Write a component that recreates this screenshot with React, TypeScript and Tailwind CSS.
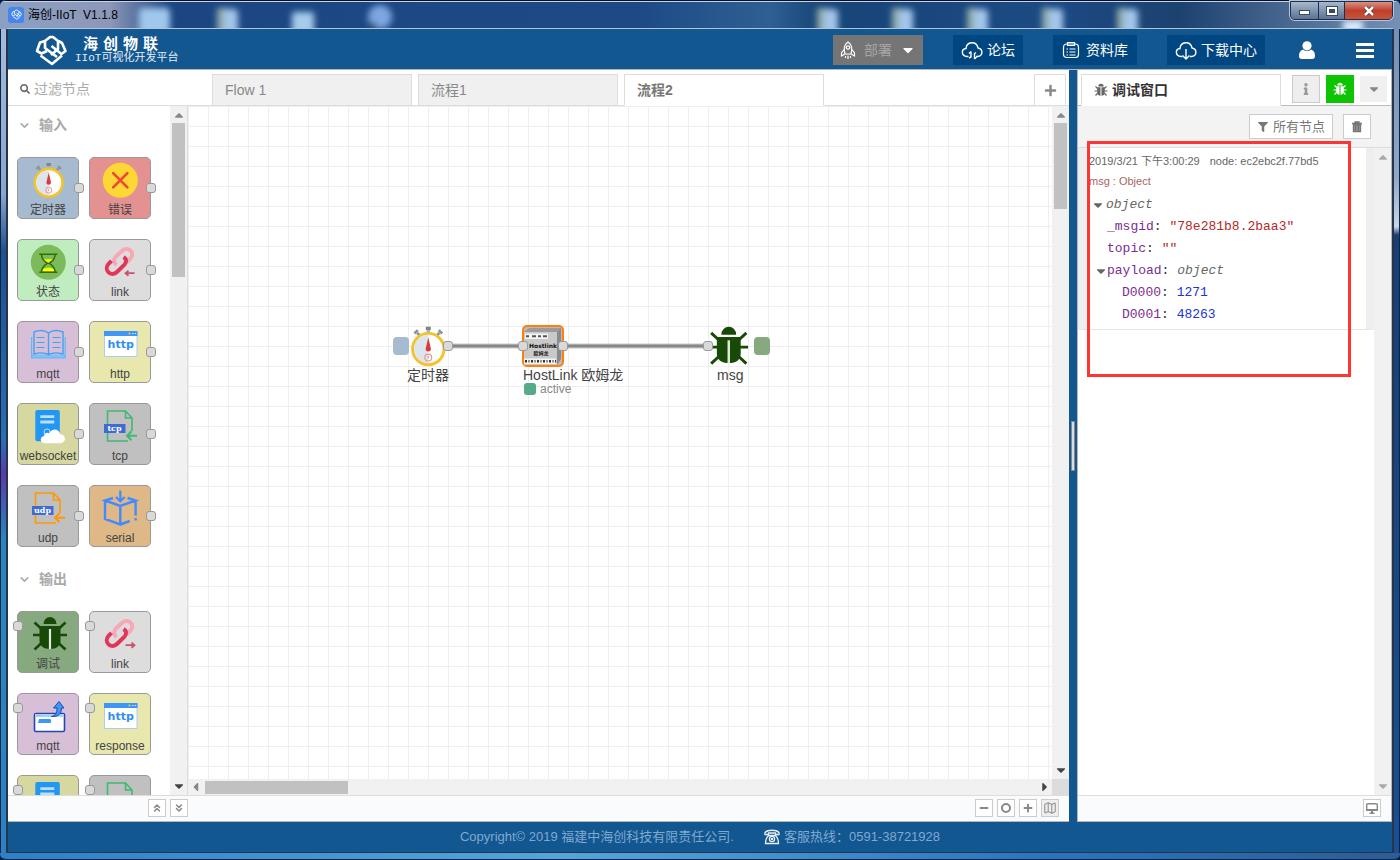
import React from 'react';
import { ChevronDown, ChevronsDown, ChevronsUp, Map as MapIcon } from 'lucide-react';
import { FaCaretDown, FaCaretUp, FaFilter, FaInfo, FaMinus, FaPlus, FaSearch } from 'react-icons/fa';

type IconProps = { className?: string };

/* ---------- node icons, all drawn on the 62x44 top part of a node ---------- */

function NodeIcon({ className = 'w-full h-[44px]', children }: IconProps & { children: React.ReactNode }) {
  return (
    <svg viewBox="0 0 62 44" fill="none" className={className} aria-hidden="true">
      {children}
    </svg>
  );
}

function TimerIcon({ className }: IconProps) {
  return (
    <NodeIcon className={className}>
      <path d="M29.5 5h4.4v3h-4.4z" fill="#7d868c" />
      <path d="M31.7 8v3" stroke="#a9b0b4" strokeWidth="3" />
      <path d="M19.5 11l3-3M22 10.5l2 2M43.9 11l-3-3M41.4 10.5l-2 2" stroke="#8b9499" strokeWidth="2.4" />
      <circle cx="31.7" cy="24.7" r="13.8" fill="#fff" stroke="#f4c22b" strokeWidth="2.6" />
      <path d="M31.7 12.2a12.5 12.5 0 0 0 0 25z" fill="#dde5ec" />
      <path d="M31.7 14.5l2.3 10a2.3 2.3 0 1 1-4.6 0z" fill="#d93a3a" />
      <circle cx="31.7" cy="32.2" r="3" stroke="#f0928e" />
      <path d="M31.7 30.8v2.2" stroke="#f0928e" />
    </NodeIcon>
  );
}

function ErrorIcon() {
  return (
    <NodeIcon>
      <circle cx="31.3" cy="22.3" r="17.5" fill="#fdd835" />
      <path d="M24.2 15.2l14.2 14.2M38.4 15.2L24.2 29.4" stroke="#f44336" strokeWidth="2.6" strokeLinecap="round" />
    </NodeIcon>
  );
}

function StatusIcon() {
  return (
    <NodeIcon>
      <circle cx="31.3" cy="22.3" r="17.5" fill="#7dba5a" />
      <path d="M25.5 20.5l1.5-1.2h8l1.8 0-5.5 3.2zM24.5 31.5c1-5 13-5 14 0z" fill="#ffff00" />
      <path
        d="M22.3 14.3h18M22.3 32.3h18M24.5 14.5c0 5 3 7 5.8 8.8-2.8 1.8-5.8 4-5.8 8.8M38.1 14.5c0 5-3 7-5.8 8.8 2.8 1.8 5.8 4 5.8 8.8"
        stroke="#2d7008"
        strokeWidth="1.5"
      />
    </NodeIcon>
  );
}

function LinkIcon({ out = false }: { out?: boolean }) {
  return (
    <NodeIcon>
      <path
        d="M27.5 25c-2.8-2.2-3.2-5.8-.8-8.2l6.5-6c2.6-2.4 6.2-2.2 8.4-.1s2.2 5.400-.2 7.800l-3.400 3.500"
        stroke="#f6a8b6"
        strokeWidth="4"
      />
      <path
        d="M22.500 20.800l-3 3c-2.400 2.600-2.200 6.400 0 8.600s6 2 8.400-.4l7.600-7.400c2.400-2.600 2-5.600-.9-7.600"
        stroke="#e3355a"
        strokeWidth="4"
      />
      {out ? (
        <path d="M36.500 33.200h8M42.500 30.600l3 2.600-3 2.600" stroke="#cc5069" strokeWidth="1.8" />
      ) : (
        <path d="M45.500 33.200h-8M39.500 30.600l-3 2.600 3 2.600" stroke="#cc5069" strokeWidth="1.8" />
      )}
    </NodeIcon>
  );
}

function BookIcon() {
  return (
    <NodeIcon>
      <path d="M15 32.500h33V36H15z" fill="#7fc0f8" />
      <path
        d="M17 10c5-2 10.500-2 14.500 1v21.500c-4-2-9.500-2-14.500-.5zM46 10c-5-2-10.500-2-14.500 1v21.500c4-2 9.500-2 14.500-.5z"
        stroke="#42a0f5"
        strokeWidth="1.4"
      />
      <path d="M14.600 15v21h33.600V15" stroke="#64b5f6" strokeWidth="1.2" />
      <path d="M19.500 15.500h8M19.500 20.500h8M19.500 25.500h8M35.500 15.500h8M35.500 20.500h8M35.500 25.500h8" stroke="#42a0f5" strokeWidth="1.2" />
    </NodeIcon>
  );
}

function HttpIcon() {
  return (
    <NodeIcon>
      <path d="M15.500 9.500h32.500v25H15.500z" fill="#fff" stroke="#a9cdf0" />
      <path d="M15 9h33.500v5H15z" fill="#3c97f6" />
      <circle cx="40.5" cy="11.5" r="1" fill="#fdd835" />
      <path d="M43 11.500h4" stroke="#c9e0fa" strokeDasharray="1.5 1" />
      <text x="31.7" y="26" textAnchor="middle" fill="#2f8ff5" fontSize="11" fontWeight="700" fontFamily="DejaVu Sans, sans-serif">
        http
      </text>
    </NodeIcon>
  );
}

function WebsocketIcon() {
  return (
    <NodeIcon>
      <rect x="18.3" y="6" width="24.5" height="31.3" rx="2" fill="#2196f3" />
      <path d="M23.300 12.700h14M23.300 18h14" stroke="#bbdefb" strokeWidth="2.8" />
      <circle cx="30" cy="28" r="3" stroke="#bbdefb" />
      <path d="M28 39.300c-5.500 0-5.500-7-.8-7.300 0-3 3.300-4 5-2.500 2-5.500 10-5.300 11 .8 6.500.2 6 9 .3 9z" fill="#fff" />
    </NodeIcon>
  );
}

function ProtocolIcon({ name, doc }: { name?: string; doc: string }) {
  return (
    <NodeIcon>
      <path d="M39 37H18.500V7h18l6.500 7v13M36.500 7v7H43" stroke={doc} strokeWidth="1.6" />
      <path d="M15 20h21.500v9H15z" fill="#3f6bd6" />
      {name && (
        <text x="25.5" y="27" textAnchor="middle" fill="#fff" fontSize="8" fontWeight="700" fontFamily="DejaVu Serif, serif">
          {name}
        </text>
      )}
      <path d="M48 31.700H38M42.500 27.200L38 31.700l4.500 4.500" stroke={doc} strokeWidth="2" />
    </NodeIcon>
  );
}

function SerialIcon() {
  return (
    <NodeIcon>
      <path d="M31.300 4.500V15M27 11l4.300 4.300L35.600 11" stroke="#448aff" strokeWidth="2.2" />
      <path
        d="M24 12L16 14.500l15.300 5.500L46.600 14.500l-8-2.500M16 14.500V33l15.300 5.500V20M31.300 38.500l9.500-3.500M46.600 14.500v15M46.600 32v2.500"
        stroke="#448aff"
        strokeWidth="2.4"
      />
    </NodeIcon>
  );
}

function BeetleIcon({ className }: IconProps) {
  return (
    <NodeIcon className={className}>
      <path d="M26.500 12a6.500 7 0 0 1 13 0z" fill="#174a06" />
      <path d="M22.500 14h21v14.500c0 5.500-4 8.500-10.500 8.500s-10.500-3-10.500-8.500z" fill="#174a06" />
      <path d="M33 17v20" stroke="#dfe8da" strokeWidth="2.2" />
      <path
        d="M24 16.500l-6.500-6M42 16.500l6.500-6M23 23h-7M43 23h7M24.500 31l-7 6.500M41.500 31l7 6.500"
        stroke="#174a06"
        strokeWidth="2.6"
      />
    </NodeIcon>
  );
}

function PublishIcon() {
  return (
    <NodeIcon>
      <rect x="17.5" y="19.5" width="30" height="18" rx="1.5" fill="#fff" stroke="#2346b0" strokeWidth="1.6" />
      <path d="M18 20h29v3H18z" fill="#a8d0ff" />
      <path d="M19.500 21.500h5" stroke="#f0a050" strokeDasharray="1 1" />
      <path d="M22 25h11c1.500 0 1.500 4 0 4H21z" fill="#3f96fa" />
      <path d="M34.500 22.500c4-1 5.500-3 5.500-8.500h-3.500L42 7.500l5 6.500h-2.500c0 6.500-4 9-10 8.500z" fill="#3f96fa" stroke="#2346b0" />
    </NodeIcon>
  );
}

function DeviceIcon() {
  return (
    <svg viewBox="0 0 38 38" className="h-[38px] w-[38px]" aria-hidden="true">
      <path d="M0 5l5-4h32l-4 4z" fill="#9b9b9b" />
      <path d="M33 5l4-4v31l-4 6z" fill="#8a8a8a" />
      <path d="M0 5h33v33H0z" fill="#c9c9c9" />
      <path d="M1 6.500h23V12H1zM0 31.500h32V37H0z" fill="#f4f4f4" />
      <path d="M2 9.300h3M8 9.300h4M14 9.300h3M19 9.300h4" stroke="#555" strokeWidth="2" />
      <path d="M1 34.300h31" stroke="#333" strokeWidth="2.4" strokeDasharray="2 1.5 1 1.5" />
      <text x="19" y="20.5" textAnchor="middle" fontSize="6" fontWeight="700" fontFamily="DejaVu Sans, sans-serif" fill="#111">
        Hostlink
      </text>
      <text x="17" y="28" textAnchor="middle" fontSize="5" fontWeight="700" fontFamily="Noto Sans CJK SC, sans-serif" fill="#222">
        欧姆龙
      </text>
    </svg>
  );
}

/* ---------- small interface icons ---------- */

function BugIcon({ className }: IconProps) {
  return (
    <svg viewBox="0 0 14 14" className={className} aria-hidden="true">
      <path d="M4.300 3.500a2.700 2.700 0 0 1 5.400 0z" fill="currentColor" />
      <path d="M3.200 4.200h3.300v8.600C4.300 12.800 3.200 11 3.200 9zM7.500 4.200h3.300V9c0 2-1.100 3.800-3.300 3.800z" fill="currentColor" />
      <path d="M3.500 5.500L1.500 3.300M10.500 5.500l2-2.200M3.500 8H.5M10.500 8h3M3.800 10l-2.300 2.500M10.200 10l2.300 2.500" stroke="currentColor" strokeWidth="1.2" />
    </svg>
  );
}

function Logo({ className }: IconProps) {
  return (
    <svg viewBox="0 0 32 32" fill="none" stroke="currentColor" strokeWidth="2.6" strokeLinejoin="round" className={className} aria-hidden="true">
      <path d="M16 21l7-6V7l-5-4h-3l-5 4v7l12 9" />
      <path d="M10 7L5 8.500 2 17l4.500 2.500L12 17" />
      <path d="M23.500 7l3.500 2 3.500 8-4 3-10-8" />
      <path d="M5.500 21.500L17 30l10-8.500" />
    </svg>
  );
}

function RocketIcon() {
  return (
    <svg viewBox="0 0 16 18" fill="none" stroke="#fff" strokeWidth="1.2" className="h-[18px] w-[16px]" aria-hidden="true">
      <path d="M5 13c-1.500-5-.5-9.500 3-12 3.500 2.500 4.500 7 3 12zM4.500 8l-3 4v3L5 13M11.500 8l3 4v3L11 13M5.500 15v2M8 14.500V18M10.500 15v2" />
      <circle cx="8" cy="6.5" r="1.7" />
    </svg>
  );
}

function CloudIcon({ children }: { children: React.ReactNode }) {
  return (
    <svg viewBox="0 0 22 20" fill="none" stroke="#fff" strokeWidth="1.4" className="h-[20px] w-[22px]" aria-hidden="true">
      <path d="M7.500 16.500H6c-6-.5-6-7.500-1-8 .5-7 10.500-8 12-.5 5.500 1 5 8-.5 8.500H15" />
      {children}
    </svg>
  );
}

function ClipboardIcon() {
  return (
    <svg viewBox="0 0 18 18" fill="none" stroke="#fff" strokeWidth="1.2" className="h-[18px] w-[18px]" aria-hidden="true">
      <rect x="1.5" y="3" width="15" height="13.5" rx="3" />
      <path d="M5.500 4.500v-3h7v3zM7.500 8h6M7.500 11h6M7.500 14h6M4.500 8H6M4.500 11H6M4.500 14H6" />
    </svg>
  );
}

function PhoneIcon() {
  return (
    <svg viewBox="0 0 16 16" fill="none" stroke="#e6eef6" strokeWidth="1.3" className="h-[16px] w-[16px]" aria-hidden="true">
      <path d="M1 5.500V3.500c3-3 11-3 14 0v2h-3.500V4h-7v1.500zM4.500 6.500C2 9 1.500 11 1.500 14.500h13c0-3.500-.5-5.500-3-8z" />
      <circle cx="8" cy="10" r="2.6" />
      <circle cx="8" cy="10" r=".6" />
    </svg>
  );
}

/* ---------- window frame ---------- */

function TitleBar() {
  return (
    <div className="relative flex h-[29px] shrink-0 items-start justify-between overflow-hidden rounded-t-[6px] bg-[linear-gradient(90deg,#8ba0c4_0px,#8d97b8_110px,#1b4682_170px,#1d4a85_640px,#2e6093_770px,#174577_820px,#1c4a84_1050px,#1c4270_1180px,#4a6890_1290px,#7590b4_100%)]">
      <svg className="absolute inset-0 h-full w-full" aria-hidden="true">
        <defs>
          <filter id="soft" x="-50%" y="-50%" width="200%" height="200%">
            <feGaussianBlur stdDeviation="3" />
          </filter>
        </defs>
        <g filter="url(#soft)">
          <rect x="139" y="8" width="31" height="26" rx="4" fill="#9fc8ec" />
          <rect x="292" y="12" width="22" height="24" rx="3" fill="#a7cbec" />
          <circle cx="380" cy="17" r="12" fill="#7ea6e0" />
          <circle cx="372" cy="27" r="5" fill="#33507c" />
          <rect x="1343" y="20" width="20" height="16" fill="#d8e8fa" />
          {[217, 817, 892, 967, 1042, 1117].map((x) => (
            <g key={x}>
              <rect x={x} y="8" width="10" height="28" fill="#90aaa8" />
              <rect x={x + 7} y="9" width="14" height="28" rx="4" fill="#a3c6ea" />
            </g>
          ))}
        </g>
        <path d="M0 .5h1400" stroke="#04102a" />
        <path d="M4 1.500h1392" stroke="#c5d3e6" />
        <path d="M7 28.500h1386" stroke="#b3c3d8" />
      </svg>
      <div className="relative flex h-full items-center gap-1 pl-2">
        <span className="flex h-[16px] w-[16px] items-center justify-center rounded-[3px] bg-[#4585ee] text-white">
          <Logo className="h-[11px] w-[11px]" />
        </span>
        <span className="whitespace-pre text-[12px] text-black">海创-IIoT  V1.1.8</span>
      </div>
      <div className="relative mr-[7px] mt-[1px] flex h-[19px] overflow-hidden rounded-b-[5px] border border-[#1c2f4c] shadow-[0_0_0_1px_#b8c6da]">
        <button aria-label="最小化" className="flex w-[28px] items-center justify-center border-r border-[#1c2f4c] bg-linear-to-b from-[#a9b7cb] to-[#5b7396]">
          <span className="mt-1 h-[5px] w-[11px] border border-[#3b4a63] bg-white" />
        </button>
        <button aria-label="最大化" className="flex w-[26px] items-center justify-center border-r border-[#1c2f4c] bg-linear-to-b from-[#a9b7cb] to-[#5b7396]">
          <span className="h-[8px] w-[10px] border-2 border-white bg-[#3b4a63] outline outline-[#3b4a63]" />
        </button>
        <button aria-label="关闭" className="flex w-[47px] items-center justify-center bg-linear-to-b from-[#d99083] via-[#c0402a] to-[#c9533a]">
          <svg viewBox="0 0 12 10" className="h-[10px] w-[12px]" aria-hidden="true">
            <path d="M2 1l8 8M10 1L2 9" stroke="#5a2a2a" strokeWidth="4" />
            <path d="M2 1l8 8M10 1L2 9" stroke="#fff" strokeWidth="2.5" />
          </svg>
        </button>
      </div>
    </div>
  );
}

function Header() {
  const link = 'flex h-[30px] items-center gap-1 bg-[#004681] px-2 text-[14px] text-white';
  return (
    <header className="flex h-[41px] shrink-0 items-center justify-between border-b border-[#b4b7bb] bg-[#135791] pt-[2px] pl-[27px] pr-[18px] text-white">
      <div className="flex items-center gap-2">
        <Logo className="h-[32px] w-[32px]" />
        <div className="flex flex-col">
          <span className="flex gap-[5px] pl-2 text-[15px] font-bold leading-[17px]">
            {['海', '创', '物', '联'].map((c) => (
              <span key={c}>{c}</span>
            ))}
          </span>
          <span className="font-['Liberation_Mono','Noto_Sans_CJK_SC',monospace] text-[11px] leading-[13px] text-[#e3edf6]">IIoT可视化开发平台</span>
        </div>
      </div>
      <nav className="flex items-center gap-[30px]">
        <button className="flex h-[30px] w-[90px] items-center justify-between bg-[#757575] px-[7px] text-[14px] text-[#a6a6a6]">
          <RocketIcon />
          <span>部署</span>
          <FaCaretDown className="text-[16px] text-white" />
        </button>
        <a href="#forum" className={link}>
          <CloudIcon>
            <path d="M10 11.500v5.500l-2 1M13.500 19v-5.500l1.500-1M10 11.500L8 13.500M13.500 19l2-2" />
          </CloudIcon>
          论坛
        </a>
        <a href="#docs" className="flex h-[30px] items-center gap-[6px] bg-[#004681] px-[9px] text-[14px] text-white">
          <ClipboardIcon />
          资料库
        </a>
        <a href="#download" className={link}>
          <CloudIcon>
            <path d="M11 9v10M7.500 15.500L11 19l3.500-3.500" />
          </CloudIcon>
          下载中心
        </a>
        <div className="flex items-center gap-[41px] pl-1">
          <button aria-label="用户">
            <svg viewBox="0 0 16 18" fill="#fff" className="h-[18px] w-[16px]" aria-hidden="true">
              <circle cx="8" cy="4.8" r="4.6" />
              <path d="M4 8.500c2.500 2 5.500 2 8 0 3 1 4 3.500 4 6.500 0 2-1.200 3-2.700 3H2.700C1.200 18 0 17 0 15c0-3 1-5.500 4-6.500z" />
            </svg>
          </button>
          <button aria-label="菜单" className="flex w-[18px] flex-col gap-[3px]">
            <span className="h-[3px] bg-white" />
            <span className="h-[3px] bg-white" />
            <span className="h-[3px] bg-white" />
          </button>
        </div>
      </nav>
    </header>
  );
}

/* ---------- palette ---------- */

type PaletteNode = { label?: string; color: string; icon: React.ReactNode };

const inputs: PaletteNode[] = [
  { label: '定时器', color: 'bg-[#a6bbcf]', icon: <TimerIcon /> },
  { label: '错误', color: 'bg-[#e49191]', icon: <ErrorIcon /> },
  { label: '状态', color: 'bg-[#c0edc0]', icon: <StatusIcon /> },
  { label: 'link', color: 'bg-[#dddddd]', icon: <LinkIcon /> },
  { label: 'mqtt', color: 'bg-[#d8bfd8]', icon: <BookIcon /> },
  { label: 'http', color: 'bg-[#e7e7ae]', icon: <HttpIcon /> },
  { label: 'websocket', color: 'bg-[#d7d7a0]', icon: <WebsocketIcon /> },
  { label: 'tcp', color: 'bg-[#c0c0c0]', icon: <ProtocolIcon name="tcp" doc="#3fb873" /> },
  { label: 'udp', color: 'bg-[#c0c0c0]', icon: <ProtocolIcon name="udp" doc="#ff9800" /> },
  { label: 'serial', color: 'bg-[#deb887]', icon: <SerialIcon /> },
];

const outputs: PaletteNode[] = [
  { label: '调试', color: 'bg-[#87a980]', icon: <BeetleIcon /> },
  { label: 'link', color: 'bg-[#dddddd]', icon: <LinkIcon out /> },
  { label: 'mqtt', color: 'bg-[#d8bfd8]', icon: <PublishIcon /> },
  { label: 'response', color: 'bg-[#e7e7ae]', icon: <HttpIcon /> },
  { color: 'bg-[#d7d7a0]', icon: <WebsocketIcon /> },
  { color: 'bg-[#c0c0c0]', icon: <ProtocolIcon doc="#3fb873" /> },
];

const port = 'absolute h-[10px] w-[10px] rounded-[3px] border border-[#999] bg-[#d9d9d9]';

function Category({ title, nodes, side }: { title: string; nodes: PaletteNode[]; side: 'left' | 'right' }) {
  return (
    <section>
      <h2 className="h-[38px] text-[14px] font-bold text-[#aaa]">
        <button className="flex h-full items-center gap-2 pl-[10px]">
          <ChevronDown className="h-[13px] w-[13px]" strokeWidth={3} />
          {title}
        </button>
      </h2>
      <div className="grid grid-cols-[62px_62px] gap-x-[10px] gap-y-[20px] px-[9px] py-[13px]">
        {nodes.map((node, i) => (
          <div
            key={i}
            className={`relative flex h-[62px] flex-col items-center rounded-[5px] border border-[#999] ${node.color}`}
          >
            <div className="h-[44px] w-[62px]">{node.icon}</div>
            <span className="text-[12px] leading-[16px] text-[#444]">{node.label}</span>
            <span className={side === 'right' ? `${port} -right-[6px] top-[25px]` : `${port} -left-[5px] top-[9px]`} />
          </div>
        ))}
      </div>
    </section>
  );
}

function VScroll({ thumb, up = 'text-[#888]', down = 'text-[#444]' }: { thumb: string; up?: string; down?: string }) {
  return (
    <div className="flex w-[17px] shrink-0 flex-col items-center bg-[#f1f1f1]">
      <FaCaretUp className={`mt-[2px] mb-px h-[14px] w-[12px] shrink-0 ${up}`} />
      <div className={`w-[13px] bg-[#c1c1c1] ${thumb}`} />
      <FaCaretDown className={`mt-auto mb-[2px] h-[14px] w-[12px] shrink-0 ${down}`} />
    </div>
  );
}

function Palette() {
  return (
    <aside className="flex w-[180px] shrink-0 border-r border-[#ddd]">
      <div className="min-w-0 flex-1 overflow-hidden">
        <Category title="输入" nodes={inputs} side="right" />
        <Category title="输出" nodes={outputs} side="left" />
      </div>
      <VScroll thumb="h-[154px]" />
    </aside>
  );
}

/* ---------- flow canvas ---------- */

function Canvas() {
  return (
    <div className="relative min-h-0 min-w-0 flex-1 overflow-hidden bg-white bg-[linear-gradient(#eee_1px,transparent_1px),linear-gradient(90deg,#eee_1px,transparent_1px)] bg-[size:20px_20px] text-[14px] text-[#444]">
      <svg className="absolute inset-0 h-full w-full" aria-hidden="true">
        <path d="M260 240h75M375 240h145" stroke="#ccc" strokeWidth="5" />
        <path d="M260 240h75M375 240h145" stroke="#888" strokeWidth="3" />
      </svg>

      <span className="absolute left-[205px] top-[231px] h-[18px] w-[16px] rounded-[4px] bg-[#a6bbcf]" />
      <div className="absolute left-[204px] top-[215px]">
        <TimerIcon className="h-[50px] w-[71px]" />
      </div>
      <span className={`${port} left-[255px] top-[235px]`} />
      <span className="absolute left-[219px] top-[259px] leading-[20px]">定时器</span>

      <div className="absolute left-[334px] top-[219px] rounded-[5px] border-2 border-[#ff7f0e] bg-[#bbb]">
        <DeviceIcon />
      </div>
      <span className={`${port} left-[330px] top-[235px]`} />
      <span className={`${port} left-[370px] top-[235px]`} />
      <span className="absolute left-[335px] top-[259px] whitespace-nowrap leading-[20px]">HostLink 欧姆龙</span>
      <span className="absolute left-[336px] top-[276px] flex items-center gap-[4px] text-[12px] leading-[14px] text-[#888]">
        <span className="h-[12px] w-[12px] rounded-[3px] bg-[#5a8]" />
        active
      </span>

      <div className="absolute left-[503px] top-[215px]">
        <BeetleIcon className="h-[50px] w-[71px]" />
      </div>
      <span className={`${port} left-[515px] top-[235px]`} />
      <span className="absolute left-[566px] top-[231px] h-[18px] w-[16px] rounded-[4px] bg-[#87a980]" />
      <span className="absolute left-[529px] top-[259px] leading-[20px]">msg</span>
    </div>
  );
}

function Editor() {
  const tab = 'h-[32px] w-[200px] border px-3 text-left text-[14px]';
  const tool = 'flex h-[18px] w-[18px] items-center justify-center border border-[#ccc] bg-white text-[#888]';
  return (
    <main className="flex min-w-0 flex-1 flex-col bg-white">
      <div className="flex h-[36px] shrink-0 items-end border-b border-[#ddd]">
        <label className="flex h-full w-[204px] shrink-0 items-center gap-1 pl-[12px] pt-[3px]">
          <FaSearch className="h-[10px] w-[10px] shrink-0 text-[#666]" />
          <input type="text" placeholder="过滤节点" aria-label="过滤节点" className="w-[140px] bg-transparent text-[14px] outline-none placeholder:text-[#aaa]" />
        </label>
        <div className="-mb-px flex min-w-0 flex-1 gap-[6px]">
          <button className={`${tab} border-[#ddd] bg-[#f0f0f0] text-[#888]`}>Flow 1</button>
          <button className={`${tab} border-[#ddd] bg-[#f0f0f0] text-[#888]`}>流程1</button>
          <button className={`${tab} border-[#ddd] border-b-white bg-white font-bold text-[#777]`}>流程2</button>
        </div>
        <button aria-label="添加流程" className="mr-[3px] flex h-[31px] w-[32px] items-center justify-center border border-b-0 border-[#ddd] text-[#888]">
          <FaPlus className="h-[13px] w-[13px]" />
        </button>
      </div>

      <div className="flex min-h-0 flex-1">
        <Palette />
        <div className="flex min-w-0 flex-1 flex-col">
          <div className="flex min-h-0 flex-1">
            <Canvas />
            <VScroll thumb="h-[86px]" />
          </div>
          <div className="flex h-[16px] shrink-0">
            <div className="flex flex-1 items-center bg-[#f1f1f1]">
              <FaCaretDown className="mx-[2px] h-[14px] w-[13px] rotate-90 text-[#888]" />
              <div className="h-[13px] w-[143px] bg-[#c1c1c1]" />
              <FaCaretDown className="ml-auto mr-[2px] h-[14px] w-[12px] -rotate-90 text-[#444]" />
            </div>
            <div className="w-[17px] bg-[#dcdcdc]" />
          </div>
        </div>
      </div>

      <div className="flex h-[27px] shrink-0 items-start justify-between border-b border-t border-b-[#b4b7bb] border-t-[#ddd] bg-[#fafbfd] pl-[140px] pr-[10px] pt-[3px]">
        <div className="flex gap-1">
          <button aria-label="全部折叠" className={tool}>
            <ChevronsUp className="h-[12px] w-[12px]" strokeWidth={3} />
          </button>
          <button aria-label="全部展开" className={tool}>
            <ChevronsDown className="h-[12px] w-[12px]" strokeWidth={3} />
          </button>
        </div>
        <div className="flex gap-1">
          <button aria-label="缩小" className={tool}>
            <FaMinus className="h-[10px] w-[10px]" />
          </button>
          <button aria-label="重置缩放" className={tool}>
            <span className="h-[10px] w-[10px] rounded-full border-2 border-[#888]" />
          </button>
          <button aria-label="放大" className={tool}>
            <FaPlus className="h-[10px] w-[10px]" />
          </button>
          <button aria-label="导航图" className="flex h-[18px] w-[18px] items-center justify-center border border-[#ccc] bg-[#eee] text-[#999]">
            <MapIcon className="h-[14px] w-[14px]" strokeWidth={2} />
          </button>
        </div>
      </div>
    </main>
  );
}

/* ---------- debug sidebar ---------- */

function Key({ children }: { children: React.ReactNode }) {
  return (
    <>
      <span className="text-[#792e90]">{children}</span>:{' '}
    </>
  );
}

function DebugMessage() {
  return (
    <div className="border-x-8 border-b border-[#eee] border-b-[#e5e5e5] bg-white pb-[3px] pl-[3px] pt-[3px]">
      <div className="flex gap-[10px] text-[11px] leading-[20px] text-[#666]">
        <span>2019/3/21 下午3:00:29</span>
        <span>node: ec2ebc2f.77bd5</span>
      </div>
      <div className="text-[11px] leading-[20px] text-[#a66]">msg : Object</div>
      <div className="whitespace-pre pt-[3px] font-['Liberation_Mono',monospace] text-[13px] leading-[22px] text-[#333]">
        <div className="flex items-center gap-[2px] pl-[3px]">
          <FaCaretDown className="h-[14px] w-[12px] text-[#666]" />
          <span className="italic text-[#666]">object</span>
        </div>
        <div className="pl-[18px]">
          <Key>_msgid</Key>
          <span className="text-[#b72828]">"78e281b8.2baa3"</span>
        </div>
        <div className="pl-[18px]">
          <Key>topic</Key>
          <span className="text-[#b72828]">""</span>
        </div>
        <div className="flex items-center pl-[6px]">
          <FaCaretDown className="h-[14px] w-[12px] text-[#666]" />
          <span>
            <Key>payload</Key>
            <span className="italic text-[#666]">object</span>
          </span>
        </div>
        <div className="pl-[33px]">
          <Key>D0000</Key>
          <span className="text-[#2033d6]">1271</span>
        </div>
        <div className="pl-[33px]">
          <Key>D0001</Key>
          <span className="text-[#2033d6]">48263</span>
        </div>
      </div>
    </div>
  );
}

function Sidebar() {
  return (
    <aside className="relative flex w-[315px] shrink-0 flex-col border-x border-[#b4b7bb] bg-white">
      <div className="flex h-[36px] shrink-0 items-end border-b border-[#bbb] pl-[3px] pr-[4px]">
        <div className="-mb-px flex h-[32px] flex-1 items-center gap-1 border border-[#ddd] border-b-white bg-white pl-3 text-[14px] font-bold text-[#333]">
          <BugIcon className="h-[14px] w-[14px] text-[#666]" />
          调试窗口
        </div>
        <div className="flex h-full items-center gap-[6px] pl-[11px] pt-[3px]">
          <button aria-label="信息" className="flex h-[28px] w-[28px] items-center justify-center border border-[#ccc] bg-[#eee] text-[#999]">
            <FaInfo className="h-[12px] w-[12px]" />
          </button>
          <button aria-label="调试" className="flex h-[28px] w-[28px] items-center justify-center bg-[#0dc400] text-white">
            <BugIcon className="h-[14px] w-[14px]" />
          </button>
          <button aria-label="更多" className="flex h-[26px] w-[27px] items-center justify-center bg-[#f0f0f0] text-[#888]">
            <FaCaretDown className="h-[14px] w-[14px]" />
          </button>
        </div>
      </div>

      <div className="flex h-[42px] shrink-0 items-center justify-end gap-[10px] border-b border-[#ddd] bg-[#f3f3f3] pr-[20px]">
        <button className="flex h-[25px] w-[84px] items-center justify-center gap-1 border border-[#ccc] bg-white text-[13px] text-[#777]">
          <FaFilter className="h-[10px] w-[12px]" />
          所有节点
        </button>
        <button aria-label="清空" className="flex h-[25px] w-[28px] items-center justify-center border border-[#ccc] bg-white">
          <svg viewBox="0 0 12 12" className="h-[12px] w-[12px]" aria-hidden="true">
            <path d="M1 2.500h10M4 2.500V1h4v1.500M2.500 4v6.500h7V4z" fill="#999" stroke="#777" strokeWidth="1.4" />
            <path d="M4.700 5v4.500M7.300 5v4.500" stroke="#666" />
          </svg>
        </button>
      </div>

      <div className="flex min-h-0 flex-1">
        <div className="min-w-0 flex-1">
          <DebugMessage />
        </div>
        <VScroll thumb="h-0" up="text-[#aaa]" down="text-[#aaa]" />
      </div>

      <div className="flex h-[27px] shrink-0 items-start justify-end border-b border-t border-b-[#b4b7bb] border-t-[#ddd] bg-[#fafbfd] pr-[10px] pt-[3px]">
        <button aria-label="弹出窗口" className="flex h-[18px] w-[18px] items-center justify-center border border-[#ccc] bg-white">
          <svg viewBox="0 0 12 11" className="h-[11px] w-[12px]" aria-hidden="true">
            <rect x=".7" y=".7" width="10.6" height="6.6" rx="1" fill="#fff" stroke="#888" strokeWidth="1.4" />
            <path d="M0 6h12v2H0zM5 8h2v1.500h1.500V11h-5V9.500H5z" fill="#888" />
          </svg>
        </button>
      </div>

      {/* highlight around the message */}
      <div className="pointer-events-none absolute left-[9px] top-[71px] h-[236px] w-[264px] border-[3px] border-[#ff3535]" />
    </aside>
  );
}

export default function App() {
  return (
    <div className="flex h-screen flex-col overflow-hidden bg-[#061a38] font-['Liberation_Sans','Noto_Sans_CJK_SC',sans-serif]">
      <div className="flex min-h-0 flex-1 flex-col rounded-[6px] bg-[#1f6bb3]">
        <TitleBar />
        <div className="flex min-h-0 flex-1 rounded-b-[6px] border-b border-[#0b2446] bg-[linear-gradient(90deg,#2d80c6_0%,#55a5dc_40%,#2a74bd_75%,#2b5d98_100%)] pb-[6px]">
          <div className="w-[8px] shrink-0 border-l border-r-2 border-l-[#0b2446] border-r-[#26344c] bg-[linear-gradient(#a5bcd9_0%,#8aa6cd_20%,#1d508f_27%,#2a6fb0_50%,#5a3aa8_54%,#2787bd_62%,#2a82c4_100%)]" />
          <div className="flex min-w-0 flex-1 flex-col border-b border-[#26344c]">
            <Header />
            <div className="flex min-h-0 flex-1 bg-[#135791]">
              <Editor />
              <div className="flex w-[8px] shrink-0 items-center justify-center">
                <span className="h-[50px] w-[4px] border border-[#888] bg-[#ddd]" />
              </div>
              <Sidebar />
            </div>
            <footer className="flex h-[30px] shrink-0 items-center justify-center gap-[30px] bg-[#135791] text-[13px] text-[#7fa9d0]">
              <span>Copyright© 2019 福建中海创科技有限责任公司.</span>
              <span className="flex items-center gap-1">
                <PhoneIcon />
                客服热线：0591-38721928
              </span>
            </footer>
          </div>
          <div className="w-[8px] shrink-0 border-l-2 border-r border-l-[#26344c] border-r-[#0b2446] bg-[linear-gradient(#7590b4_0%,#8fa8c6_18%,#c8d6e8_24%,#173f74_25%,#1c4f90_100%)]" />
        </div>
      </div>
    </div>
  );
}
